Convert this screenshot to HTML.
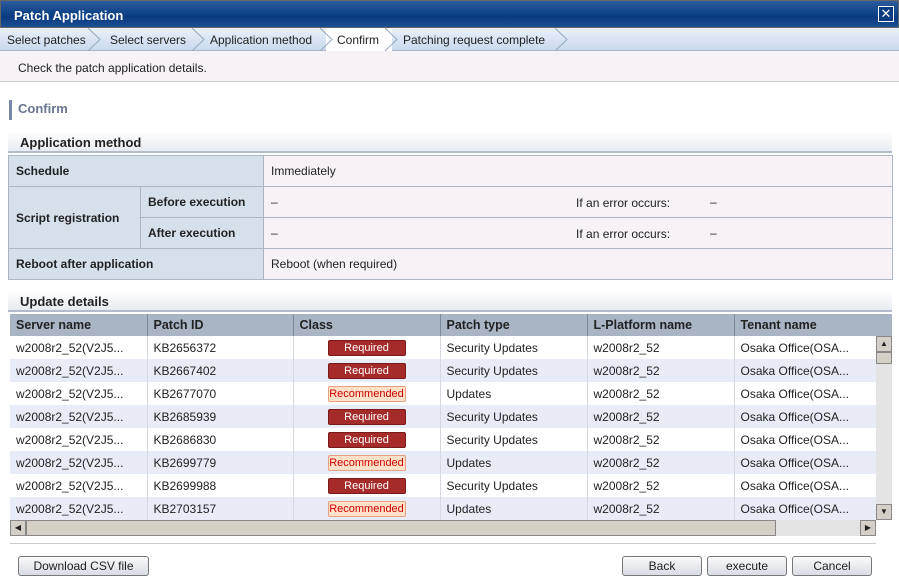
<!DOCTYPE html>
<html><head><meta charset="utf-8"><style>
*{box-sizing:border-box;margin:0;padding:0}
body{width:899px;height:588px;position:relative;overflow:hidden;background:#fff;font-family:"Liberation Sans",sans-serif;font-size:12px;color:#222}
.a{position:absolute}
.title{left:0;top:0;width:899px;height:28px;background:linear-gradient(#2a5c9e,#0a3b80 60%,#1d4f93);color:#fff;font-weight:bold;font-size:13px;padding:7px 0 0 13px;border:1px solid #666}
.close{right:5px;top:6px;width:16px;height:16px;border:1px solid #fff;color:#fff;font-size:13px;line-height:13px;text-align:center;background:#0a3b80}
.bc{left:0;top:28px;width:899px;height:23px;background:linear-gradient(#eaf1fb,#c9d9ee);border-bottom:1px solid #a8b6c8}
.bc span{position:absolute;top:5px;font-size:12px;color:#222}
.cur{left:326px;top:28px;width:66px;height:23px;background:#fff}
.msg{left:0;top:51px;width:899px;height:31px;background:#f6f2f6;border-bottom:1px solid #ccc;padding:10px 0 0 18px}
.h1{left:9px;top:100px;border-left:3px solid #7a88a8;padding-left:6px;height:20px;color:#6a7590;font-weight:bold;font-size:13px;line-height:18px}
.h2{left:8px;width:884px;height:21px;background:linear-gradient(#fff,#e8ebf0);border-bottom:2px solid #b4bccb;font-weight:bold;font-size:13px;padding:3px 0 0 12px}
table{border-collapse:collapse}
.m{table-layout:fixed}
.m td{border:1px solid #aab5c6;height:31px;padding:0 7px;white-space:nowrap}
.m .l{background:#d6e0ea;font-weight:bold}
.m .v{background:#f6f2f6;position:relative}
.g{left:10px;top:314px;width:866px;height:206px;overflow:hidden}
.g td{height:23px;padding:0 6px;white-space:nowrap;overflow:hidden}
.g th{height:22px;background:#a9b4c5;text-align:left;font-weight:bold;padding:0 6px;border-right:1px solid #7d889b;font-size:12.5px}
.g td{border-right:1px solid #d4d8e0}
.g tr:nth-child(even) td{background:#fff}
.g tr:nth-child(odd) td{background:#e8ecf6}
.r{display:inline-block;width:78px;height:16px;line-height:14px;text-align:center;border-radius:2px;font-size:11px}
.rq{background:#a52a2a;color:#fff;border:1px solid #7a1a1a}
.rc{background:#ffe0c8;color:#c00;border:1px solid #e8a080}
.btn{top:556px;height:20px;border:1px solid #777;border-radius:3px;background:linear-gradient(#fafafa,#d8dce4);text-align:center;line-height:18px;font-size:12px}
.sb{background:#d4d0c8;border:1px solid #888}
</style></head><body>
<div class="a title">Patch Application</div>
<div class="a close">✕</div>
<div class="a bc"></div>
<div class="a cur"></div>
<svg class="a" style="left:0;top:28px" width="600" height="23">
<g fill="none" stroke="#98a8c0"><path d="M88 0 L100 11.5 L88 23"/><path d="M192 0 L204 11.5 L192 23"/><path d="M320 0 L332 11.5 L320 23"/><path d="M385 0 L397 11.5 L385 23"/><path d="M555 0 L567 11.5 L555 23"/></g></svg>
<div class="a bc" style="background:none;border:none"><span style="left:7px">Select patches</span><span style="left:110px">Select servers</span><span style="left:210px">Application method</span><span style="left:337px">Confirm</span><span style="left:403px">Patching request complete</span></div>
<div class="a msg">Check the patch application details.</div>
<div class="a h1">Confirm</div>
<div class="a h2" style="top:132px">Application method</div>
<table class="a m" style="left:8px;top:155px;width:884px">
<colgroup><col style="width:132px"><col style="width:123px"><col style="width:629px"></colgroup>
<tr><td class="l" colspan="2">Schedule</td><td class="v">Immediately</td></tr>
<tr><td class="l" rowspan="2">Script registration</td><td class="l">Before execution</td><td class="v">–<span class="a" style="left:312px;top:9px">If an error occurs:</span><span class="a" style="left:446px;top:8px">–</span></td></tr>
<tr><td class="l">After execution</td><td class="v">–<span class="a" style="left:312px;top:9px">If an error occurs:</span><span class="a" style="left:446px;top:8px">–</span></td></tr>
<tr><td class="l" colspan="2">Reboot after application</td><td class="v">Reboot (when required)</td></tr>
</table>
<div class="a h2" style="top:291px">Update details</div>
<div class="a g"><table style="width:866px;table-layout:fixed">
<colgroup><col style="width:137px"><col style="width:146px"><col style="width:147px"><col style="width:147px"><col style="width:147px"><col style="width:142px"></colgroup>
<tr><th>Server name</th><th>Patch ID</th><th>Class</th><th>Patch type</th><th>L-Platform name</th><th>Tenant name</th></tr>
<tr><td>w2008r2_52(V2J5...</td><td>KB2656372</td><td style="text-align:center"><span class="r rq">Required</span></td><td>Security Updates</td><td>w2008r2_52</td><td>Osaka Office(OSA...</td></tr>
<tr><td>w2008r2_52(V2J5...</td><td>KB2667402</td><td style="text-align:center"><span class="r rq">Required</span></td><td>Security Updates</td><td>w2008r2_52</td><td>Osaka Office(OSA...</td></tr>
<tr><td>w2008r2_52(V2J5...</td><td>KB2677070</td><td style="text-align:center"><span class="r rc">Recommended</span></td><td>Updates</td><td>w2008r2_52</td><td>Osaka Office(OSA...</td></tr>
<tr><td>w2008r2_52(V2J5...</td><td>KB2685939</td><td style="text-align:center"><span class="r rq">Required</span></td><td>Security Updates</td><td>w2008r2_52</td><td>Osaka Office(OSA...</td></tr>
<tr><td>w2008r2_52(V2J5...</td><td>KB2686830</td><td style="text-align:center"><span class="r rq">Required</span></td><td>Security Updates</td><td>w2008r2_52</td><td>Osaka Office(OSA...</td></tr>
<tr><td>w2008r2_52(V2J5...</td><td>KB2699779</td><td style="text-align:center"><span class="r rc">Recommended</span></td><td>Updates</td><td>w2008r2_52</td><td>Osaka Office(OSA...</td></tr>
<tr><td>w2008r2_52(V2J5...</td><td>KB2699988</td><td style="text-align:center"><span class="r rq">Required</span></td><td>Security Updates</td><td>w2008r2_52</td><td>Osaka Office(OSA...</td></tr>
<tr><td>w2008r2_52(V2J5...</td><td>KB2703157</td><td style="text-align:center"><span class="r rc">Recommended</span></td><td>Updates</td><td>w2008r2_52</td><td>Osaka Office(OSA...</td></tr>
</table></div>
<div class="a" style="left:876px;top:314px;width:16px;height:22px;background:#a9b4c5"></div>
<div class="a" style="left:876px;top:336px;width:16px;height:184px;background:#e4e4e4"></div>
<div class="a sb" style="left:876px;top:336px;width:16px;height:16px;font-size:8px;text-align:center;line-height:14px">▲</div>
<div class="a sb" style="left:876px;top:352px;width:16px;height:12px"></div>
<div class="a sb" style="left:876px;top:504px;width:16px;height:16px;font-size:8px;text-align:center;line-height:14px">▼</div>
<div class="a" style="left:10px;top:520px;width:866px;height:16px;background:#e4e4e4"></div>
<div class="a sb" style="left:10px;top:520px;width:16px;height:16px;font-size:8px;text-align:center;line-height:14px">◀</div>
<div class="a sb" style="left:26px;top:520px;width:750px;height:16px"></div>
<div class="a sb" style="left:860px;top:520px;width:16px;height:16px;font-size:8px;text-align:center;line-height:14px">▶</div>
<div class="a" style="left:10px;top:543px;width:866px;height:1px;background:#ccc"></div>
<div class="a btn" style="left:18px;width:131px">Download CSV file</div>
<div class="a btn" style="left:622px;width:80px">Back</div>
<div class="a btn" style="left:707px;width:80px">execute</div>
<div class="a btn" style="left:792px;width:80px">Cancel</div>
</body></html>
